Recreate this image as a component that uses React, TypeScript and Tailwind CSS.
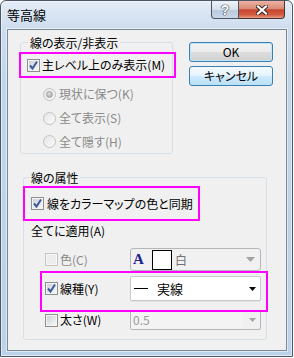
import React from "react";

const ui =
  "font-['Noto_Sans_CJK_JP','Liberation_Sans',sans-serif] [font-feature-settings:'palt']";

function CheckBox({ checked = false, disabled = false }: { checked?: boolean; disabled?: boolean }) {
  return (
    <span
      className={
        disabled
          ? "relative flex h-[13px] w-[13px] shrink-0 border border-[#c4c4c4] bg-[#f7f7f7] p-px"
          : "relative flex h-[13px] w-[13px] shrink-0 border border-[#8e8f8f] bg-[#f4f4f4] p-px"
      }
    >
      <span
        className={
          disabled
            ? "flex-1 bg-[#ededed]"
            : "flex-1 bg-[linear-gradient(135deg,#cdd1d6,#f7f7f7)]"
        }
      />
      {checked && (
        <svg className="absolute left-0 top-0" width="11" height="11" viewBox="0 0 11 11">
          <path d="M2 5.5 4.5 8.5 9 1.5" fill="none" stroke="#3f5a9c" strokeWidth="2" />
        </svg>
      )}
    </span>
  );
}

function Radio({ checked = false }: { checked?: boolean }) {
  return (
    <span className="flex h-[13px] w-[13px] shrink-0 items-center justify-center rounded-full border border-[#c2c2c2] bg-[linear-gradient(135deg,#e4e4e4,#fbfbfb)]">
      {checked && (
        <span className="h-[7px] w-[7px] rounded-full border border-[#a2a2a2] bg-[radial-gradient(circle_at_40%_35%,#e2e2e2,#9c9c9c)]" />
      )}
    </span>
  );
}

function Arrow({ dark = false }: { dark?: boolean }) {
  return dark ? (
    <svg width="7" height="4" viewBox="0 0 7 4">
      <polygon points="0,0 7,0 3.5,4" fill="#000" />
    </svg>
  ) : (
    <svg width="9" height="5" viewBox="0 0 9 5">
      <polygon points="0,0 9,0 4.5,5" fill="#a3a3a3" />
    </svg>
  );
}

export default function App() {
  return (
    <div className={`h-[358px] w-[294px] bg-white text-[12px] text-black ${ui}`}>
      <div className="flex h-[357px] w-[293px] flex-col rounded-t-[6px] border border-[#4b5766] bg-[linear-gradient(180deg,#e4edf7_0px,#cddcee_28px,#c0d5eb_80px,#bcd2ea_100%)] shadow-[inset_0_0_0_1px_rgba(255,255,255,0.55)]">
        {/* title bar */}
        <div className="flex h-[28px] items-start justify-between">
          <span className="ml-[6px] mt-[5px] text-[13px] leading-[18px] text-black">等高線</span>
          <div className="mr-[7px] flex h-[18px]">
            <div className="flex w-[28px] items-center justify-center rounded-bl-[4px] border border-t-0 border-[#4a5563] bg-[linear-gradient(180deg,#eef3f9,#d6e0ec_50%,#b9c9dc_51%,#c9d7e7)] text-[14px] font-bold leading-none text-white [text-shadow:0_0_1px_#2b3440,0_0_1px_#2b3440,0_0_1px_#2b3440] font-['Liberation_Sans',sans-serif]">
              ?
            </div>
            <div className="flex w-[46px] items-center justify-center rounded-br-[4px] border border-l-0 border-t-0 border-[#4a3431] bg-[linear-gradient(180deg,#eeb2a4,#d98a77_45%,#c7452f_52%,#d15a40_80%,#e69a84)]">
              <svg width="12" height="10" viewBox="0 0 12 10">
                <path d="M2 1.5 10 8.5M10 1.5 2 8.5" stroke="#3a2622" strokeWidth="4" strokeLinecap="square" />
                <path d="M2 1.5 10 8.5M10 1.5 2 8.5" stroke="#fff" strokeWidth="2.2" strokeLinecap="square" />
              </svg>
            </div>
          </div>
        </div>

        {/* client area */}
        <div className="ml-[6px] h-[322px] w-[280px] border border-[#7b8997] bg-[#f0f0f0] pt-[5px] shadow-[0_0_0_1px_rgba(255,255,255,0.5)]">
          <div className="flex items-start">
            <fieldset className="ml-[12px] w-[153px] min-w-0 rounded-[3px] border border-[#d5dfe5]">
              <legend className="ml-[7px] px-[2px] leading-[15px]">線の表示/非表示</legend>
              <div className="-ml-[2px] mt-[2px] flex h-[26px] w-[157px] items-center gap-[2px] border-2 border-[#ff00ff] pl-[6px]">
                <CheckBox checked />
                <span>主レベル上のみ表示(M)</span>
              </div>
              <div className="mt-[4px] pl-[22px] text-[#8a8a8a]">
                <div className="flex h-[24px] items-center gap-[3px]">
                  <Radio checked />
                  <span>現状に保つ(K)</span>
                </div>
                <div className="flex h-[24px] items-center gap-[3px]">
                  <Radio />
                  <span>全て表示(S)</span>
                </div>
                <div className="flex h-[23px] items-center gap-[3px]">
                  <Radio />
                  <span>全て隠す(H)</span>
                </div>
              </div>
            </fieldset>

            <div className="ml-[16px] mt-[7px] flex flex-col gap-[4px]">
              <button className="h-[20px] w-[84px] rounded-[3px] border border-[#3c7fb1] bg-[linear-gradient(180deg,#f3f3f3,#ebebeb_50%,#dddddd_51%,#cfcfcf)] leading-none shadow-[inset_0_0_0_1px_#bfe5fb]">
                OK
              </button>
              <button className="h-[20px] w-[84px] rounded-[3px] border border-[#3c7fb1] bg-[linear-gradient(180deg,#f4fafe,#e6f4fd_50%,#cfeafc_51%,#b9e0f9)] leading-none">
                キャンセル
              </button>
            </div>
          </div>

          <fieldset className="ml-[15px] mt-[16px] w-[244px] min-w-0 rounded-[3px] border border-[#d5dfe5] pb-[9px]">
            <legend className="ml-[6px] px-[1px] leading-[15px]">線の属性</legend>
            <div className="-ml-[1px] mt-[1px] flex h-[35px] w-[177px] items-center gap-[3px] border-2 border-[#ff00ff] pl-[6px]">
              <CheckBox checked />
              <span>線をカラーマップの色と同期</span>
            </div>
            <div className="ml-[7px] mt-[2px] h-[16px] leading-[16px]">全てに適用(A)</div>

            {/* colour row */}
            <div className="ml-[21px] mt-[9px] flex h-[23px] items-center">
              <div className="flex w-[85px] items-center gap-[2px] text-[#8a8a8a]">
                <CheckBox disabled />
                <span>色(C)</span>
              </div>
              <div className="flex h-[23px] w-[131px] items-center rounded-[3px] border border-[#b3b7ba] bg-[#f1f1f1] pl-[2px] pr-[5px]">
                <span className="w-[12px] font-['Liberation_Serif',serif] text-[15px] font-bold leading-none text-[#1b2290]">
                  A
                </span>
                <span className="ml-[7px] h-[20px] w-[20px] border border-black bg-white" />
                <span className="ml-[3px] text-[#707070]">白</span>
                <span className="ml-auto flex">
                  <Arrow />
                </span>
              </div>
            </div>

            {/* line type row */}
            <div className="relative z-10 ml-[16px] h-[41px] w-[228px] border-2 border-[#ff00ff] pl-[3px] pt-[3px]">
              <div className="flex h-[25px] items-center">
                <div className="flex w-[85px] items-center gap-[2px]">
                  <CheckBox checked />
                  <span>線種(Y)</span>
                </div>
                <div className="flex h-[25px] w-[131px] items-center rounded-[2px] border border-[#c9c9c9] bg-white pl-[3px] pr-[4px] shadow-[0_1px_0_#e3e3e3]">
                  <span className="h-px w-[14px] bg-black" />
                  <span className="ml-[9px] text-[13px]">実線</span>
                  <span className="ml-auto flex">
                    <Arrow dark />
                  </span>
                </div>
              </div>
            </div>

            {/* width row */}
            <div className="-mt-[2px] ml-[21px] flex h-[20px] items-center">
              <div className="flex w-[85px] items-center gap-[2px] pt-[-2px]">
                <CheckBox />
                <span>太さ(W)</span>
              </div>
              <div className="flex h-[20px] w-[131px] items-stretch rounded-[2px] border border-[#b3b7ba] bg-[#f0f0f0]">
                <span className="flex w-[111px] items-center bg-[#f3f3f3] pl-[2px] text-[#9a9a9a]">0.5</span>
                <span className="ml-auto flex items-center pr-[4px]">
                  <svg width="7" height="4" viewBox="0 0 7 4">
                    <polygon points="0,0 7,0 3.5,4" fill="#a3a3a3" />
                  </svg>
                </span>
              </div>
            </div>
          </fieldset>
        </div>
      </div>
    </div>
  );
}
